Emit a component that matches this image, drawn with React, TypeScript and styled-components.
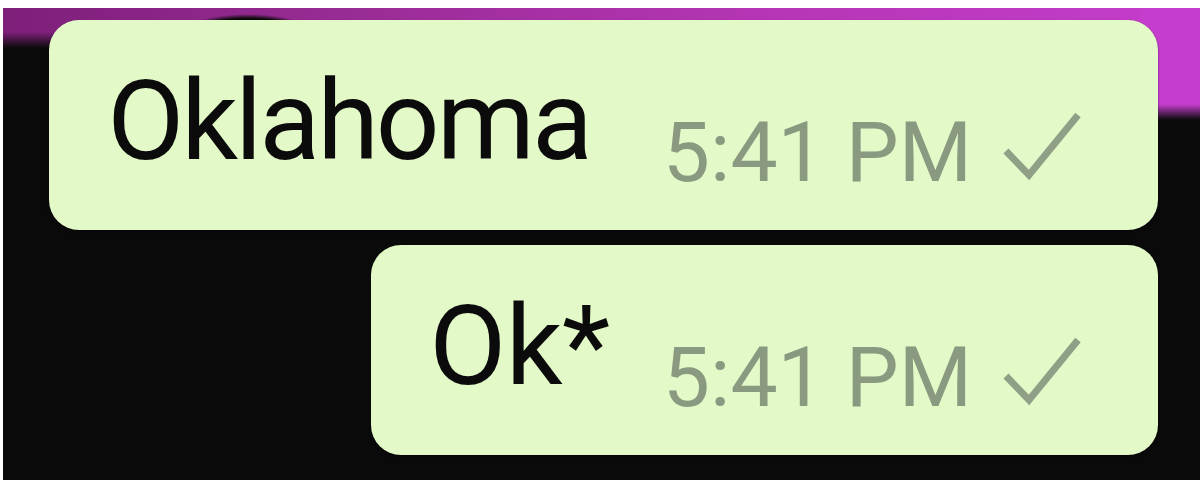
import styled, { createGlobalStyle } from 'styled-components'

const GlobalStyle = createGlobalStyle`
  html, body {
    margin: 0;
    padding: 0;
    background: #ffffff;
  }
  body {
    font-family: Roboto, "Liberation Sans", Arial, sans-serif;
  }
`

// the chat screen, with a bit of the purple wallpaper at the top
const Screen = styled.div`
  margin: 8px 0 0 3px;
  height: 472px;
  box-sizing: border-box;
  padding: 12px 42px 0 0;
  display: flex;
  flex-direction: column;
  align-items: flex-end;
  gap: 15px;
  background:
    radial-gradient(ellipse 85px 36px at 245px 42px, #0a0a0a 88%, rgba(10, 10, 10, 0) 100%),
    linear-gradient(180deg, rgba(10, 10, 10, 0) 86%, #0a0a0a 100%) right top / 60px 112px no-repeat,
    linear-gradient(#c43dcc, #c43dcc) right top / 60px 112px no-repeat,
    linear-gradient(180deg, rgba(10, 10, 10, 0) 60%, #0a0a0a 100%) left top / 100% 40px no-repeat,
    linear-gradient(90deg, #7e1f7a 0%, #9a2c96 30%, #b636b6 65%, #c43dcc 100%) left top / 100% 40px no-repeat,
    #0a0a0a;
`

const Bubble = styled.div`
  height: 210px;
  box-sizing: border-box;
  display: flex;
  align-items: flex-start;
  padding: 0 76px 0 ${p => p.$padLeft}px;
  background: #e3f9c8;
  border-radius: 30px;
  box-shadow: 0 1px 2px rgba(0, 0, 0, 0.55);
`

const MessageText = styled.span`
  margin-top: 45px;
  font-size: 112px;
  line-height: 1;
  color: #0b0b0b;
  letter-spacing: ${p => p.$tracking}px;
`

const Meta = styled.div`
  margin-top: 91px;
  margin-left: ${p => p.$gap}px;
  display: flex;
  align-items: flex-start;
  gap: 26px;
`

const Time = styled.span`
  font-size: 84px;
  line-height: 1;
  color: #8a9a80;
`

const Tick = styled.svg`
  width: 84px;
  height: 72px;
`

function Check() {
  return (
    <Tick viewBox="0 0 84 72">
      <polyline
        points="8,40 31,64 80,4"
        fill="none"
        stroke="#8fa087"
        strokeWidth="7"
        strokeLinecap="butt"
        strokeLinejoin="miter"
      />
    </Tick>
  )
}

type MessageProps = { text: string; padLeft: number; gap: number; tracking: number }

function Message({ text, padLeft, gap, tracking }: MessageProps) {
  return (
    <Bubble $padLeft={padLeft}>
      <MessageText $tracking={tracking}>{text}</MessageText>
      <Meta $gap={gap}>
        <Time>5:41 PM</Time>
        <Check />
      </Meta>
    </Bubble>
  )
}

export default function App() {
  return (
    <>
      <GlobalStyle />
      <Screen>
        <Message text="Oklahoma" padLeft={58} gap={73} tracking={-3} />
        <Message text="Ok*" padLeft={58} gap={53} tracking={-0.5} />
      </Screen>
    </>
  )
}
